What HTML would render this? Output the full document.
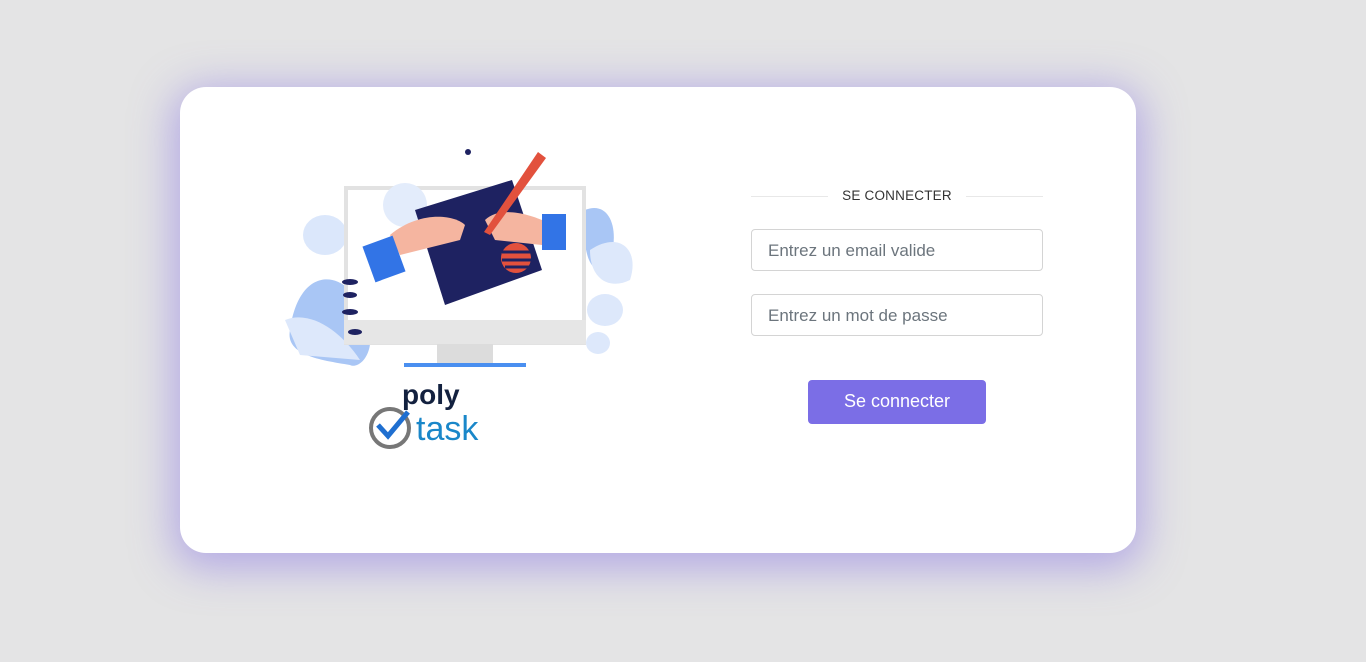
<!DOCTYPE html>
<html><head><meta charset="utf-8"><style>
html,body{margin:0;padding:0;width:1366px;height:662px;background:#e4e4e5;font-family:"Liberation Sans",sans-serif;overflow:hidden}
.card{position:absolute;left:180px;top:87px;width:956px;height:466px;background:#fff;border-radius:26px;box-shadow:0 8px 40px 8px rgba(135,115,230,.5)}
.title{position:absolute;left:751px;top:188px;width:292px;text-align:center;font-size:13.5px;color:#333;letter-spacing:.2px}
.title:before,.title:after{content:"";position:absolute;top:8px;width:77px;height:1px;background:#e8e8e8}
.title:before{left:0}.title:after{right:0}
.in{position:absolute;left:751px;height:42px;border:1px solid #d4d4d4;border-radius:4px;font-size:17px;color:#6c757d;line-height:42px;padding-left:16px;box-sizing:border-box;width:292px}
.btn{position:absolute;left:808px;top:380px;width:178px;height:44px;background:#7b6ee6;border-radius:4px;color:#fff;font-size:18px;text-align:center;line-height:43px}
</style></head><body>
<div class="card"></div>
<svg style="position:absolute;left:280px;top:140px" width="370" height="310" viewBox="0 0 370 310">
<ellipse cx="45" cy="95" rx="22" ry="20" fill="#dbe7fb"/>
<path d="M10 190 C20 120 70 130 85 175 C100 210 80 230 70 225 C40 220 5 215 10 190Z" fill="#a9c6f5"/>
<path d="M5 180 C30 170 60 190 80 220 L20 215Z" fill="#dde8fb"/>
<path d="M305 70 C330 60 340 90 330 120 C320 140 300 130 305 70Z" fill="#a9c6f5"/>
<path d="M310 110 C340 90 360 110 350 140 C330 150 310 140 310 110Z" fill="#dde8fb"/>
<ellipse cx="325" cy="170" rx="18" ry="16" fill="#dde8fb"/>
<ellipse cx="318" cy="203" rx="12" ry="11" fill="#dde8fb"/>
<rect x="66" y="48" width="238" height="155" fill="#fff" stroke="#e2e2e2" stroke-width="4"/>
<rect x="64" y="180" width="242" height="24" fill="#e6e6e6"/>
<rect x="157" y="204" width="56" height="20" fill="#dcdcdc"/>
<rect x="124" y="223" width="122" height="4" fill="#4a8ff0"/>
<circle cx="125" cy="65" r="22" fill="#e3ecfb"/>
<path d="M135 70 L232 40 L262 130 L165 165Z" fill="#1e2261"/>
<circle cx="236" cy="118" r="15" fill="#e2513d"/>
<path d="M222 112 h30 M222 120 h30 M225 127 h24" stroke="#1e2261" stroke-width="3"/>
<path d="M110 95 C140 70 175 75 185 85 L180 100 L120 115Z" fill="#f5b5a0"/>
<rect x="88" y="100" width="32" height="38" transform="rotate(-20 104 119)" fill="#3274e6"/>
<path d="M205 80 C220 65 250 75 262 80 L262 105 L215 100Z" fill="#f5b5a0"/>
<rect x="262" y="74" width="24" height="36" fill="#3274e6"/>
<path d="M258 12 L266 18 L210 95 L204 92Z" fill="#e2513d"/>
<circle cx="188" cy="12" r="3" fill="#1e2261"/>
<ellipse cx="70" cy="142" rx="8" ry="3" fill="#1e2261"/><ellipse cx="70" cy="155" rx="7" ry="3" fill="#1e2261"/><ellipse cx="70" cy="172" rx="8" ry="3" fill="#1e2261"/><ellipse cx="75" cy="192" rx="7" ry="3" fill="#1e2261"/>
<circle cx="110" cy="288" r="19" fill="none" stroke="#777" stroke-width="4"/>
<path d="M98 285 L108 296 L128 272" stroke="#1f6fd0" stroke-width="5" fill="none"/>
<text x="122" y="264" font-family="Liberation Sans,sans-serif" font-weight="bold" font-size="28" fill="#13213f">poly</text>
<text x="136" y="300" font-family="Liberation Sans,sans-serif" font-size="34" fill="#1a87c9">task</text>
</svg>
<div class="title">SE CONNECTER</div>
<div class="in" style="top:229px">Entrez un email valide</div>
<div class="in" style="top:294px">Entrez un mot de passe</div>
<div class="btn">Se connecter</div>
</body></html>
